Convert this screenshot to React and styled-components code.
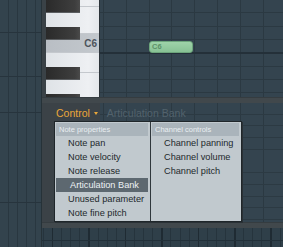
import React from "react";
import styled, { createGlobalStyle } from "styled-components";

const GlobalStyle = createGlobalStyle`
  html, body {
    margin: 0;
    padding: 0;
    background: #33434e;
    overflow: hidden;
  }
  body {
    font-family: "Liberation Sans", Arial, sans-serif;
  }
`;

const Page = styled.div`
  display: grid;
  grid-template-columns: 42px 1fr;
  width: 283px;
  height: 247px;
  overflow: hidden;
`;

const SideStrip = styled.div`
  background-color: #33434d;
  background-image:
    linear-gradient(to bottom, transparent 32px, #27343d 32px, #27343d 33px, transparent 33px, transparent 76px, #27343d 76px, #27343d 77px, transparent 77px, transparent 112px, #27343d 112px, #27343d 113px, transparent 113px, transparent 202px, #27343d 202px, #27343d 203px, transparent 203px),
    repeating-linear-gradient(to right, transparent 0, transparent 8px, #293740 8px, #293740 9px);
  border-right: 1px solid #263238;
`;

const Main = styled.div`
  display: flex;
  flex-direction: column;
  min-width: 0;
`;

const TopRow = styled.div`
  display: flex;
  height: 97px;
`;

const Gutter = styled.div`
  width: 4px;
  background: #3a4247;
`;

const Keyboard = styled.div`
  position: relative;
  display: flex;
  flex-direction: column;
  width: 53px;
  border-right: 1px solid #2b3339;
  overflow: hidden;
`;

const WhiteKey = styled.div`
  display: flex;
  align-items: center;
  justify-content: flex-end;
  height: ${(p) => p.h}px;
  flex-shrink: 0;
  box-sizing: border-box;
  padding: 1px 2px 0 0;
  border-bottom: 1px solid #c4c8cd;
  background: ${(p) =>
    p.active
      ? "linear-gradient(to right, #b9bec4, #c3c8cd)"
      : "linear-gradient(to right, #dfe3e7, #eef0f3 80%, #e4e7ea)"};
  color: #4d545c;
  font-size: 10px;
  font-weight: bold;
`;

const BlackKey = styled.div`
  position: absolute;
  left: 0;
  top: ${(p) => p.top}px;
  width: 34px;
  height: 13px;
  background: linear-gradient(to right, #2a2a2a, #3e3e3e 85%, #4a4a4a);
  border-bottom: 1px solid #5a5d60;
  box-sizing: border-box;
`;

const NoteGrid = styled.div`
  position: relative;
  flex: 1;
  background-color: #34444f;
  background-image:
    linear-gradient(to bottom, transparent 52px, #243039 52px, #243039 53.5px, transparent 53.5px),
    repeating-linear-gradient(to bottom, transparent 0, transparent 12.33px, #2b3942 12.33px, #2b3942 13.33px),
    repeating-linear-gradient(to right, transparent 0, transparent 3px, #2b3942 3px, #2b3942 4px, transparent 4px, transparent 22.8px);
`;

const Note = styled.div`
  position: absolute;
  left: ${(p) => p.x}px;
  top: ${(p) => p.y}px;
  width: ${(p) => p.w}px;
  height: 12px;
  box-sizing: border-box;
  border: 1px solid #6da57c;
  border-radius: 3px;
  background: linear-gradient(to bottom, #9ed3a9, #88c295);
  color: #5d9168;
  font-size: 7.5px;
  font-weight: bold;
  line-height: 10px;
  padding-left: 2px;
`;

const Band = styled.div`
  height: ${(p) => p.h}px;
  flex-shrink: 0;
  background: #41484c;
  border-top: 1px solid #353c40;
  box-sizing: border-box;
`;

const MidRow = styled.div`
  position: relative;
  display: grid;
  grid-template-columns: 58px 1fr;
  grid-template-rows: 18px 1fr;
  height: 119px;
`;

const Panel = styled.div`
  grid-row: 1 / 3;
  grid-column: 1;
  background: #3b4247;
`;

const EventGrid = styled.div`
  grid-row: 1 / 3;
  grid-column: 2;
  background-color: #34444f;
  background-image:
    repeating-linear-gradient(to bottom, transparent 0, transparent 10.7px, #2c3a43 10.7px, #2c3a43 11.7px),
    repeating-linear-gradient(to right, transparent 0, transparent 3px, #2b3942 3px, #2b3942 4px, transparent 4px, transparent 22.8px);
`;

const ControlBar = styled.div`
  grid-row: 1;
  grid-column: 1 / 3;
  z-index: 1;
  display: flex;
  align-items: center;
  padding: 1px 0 0 14px;
  font-size: 10.5px;
  white-space: nowrap;
`;

const ControlLabel = styled.span`
  color: #eaa73a;
`;

const Caret = styled.span`
  display: inline-block;
  margin: 1px 0 0 4px;
  border-left: 2.5px solid transparent;
  border-right: 2.5px solid transparent;
  border-top: 3px solid #eaa73a;
`;

const Current = styled.span`
  margin-left: 9px;
  color: #52626c;
`;

const Menu = styled.div`
  position: absolute;
  left: 12px;
  top: 18px;
  z-index: 2;
  display: grid;
  grid-template-columns: 96px 1fr;
  width: 188px;
  height: 101px;
  box-sizing: border-box;
  border: 1px solid #1f262a;
  background: #c1c9ce;
  box-shadow: 1px 1px 0 #2a3136;
`;

const MenuColumn = styled.div`
  display: flex;
  flex-direction: column;
  padding: 1px 2px 0 1px;
  border-right: ${(p) => (p.divided ? "1px solid #2f373c" : "none")};
`;

const MenuHeader = styled.div`
  height: 13px;
  padding-left: 3px;
  background: #aab4bb;
  color: #e9eef1;
  font-size: 7.5px;
  line-height: 13px;
  white-space: nowrap;
`;

const MenuItem = styled.div`
  height: 14px;
  padding-left: ${(p) => (p.active ? 14 : 12)}px;
  background: ${(p) => (p.active ? "#5d6870" : "transparent")};
  color: ${(p) => (p.active ? "#eef2f4" : "#22282c")};
  font-size: 9.2px;
  line-height: 14px;
  white-space: nowrap;
`;

const BottomGrid = styled.div`
  flex: 1;
  background-color: #2f3f49;
  background-image:
    linear-gradient(to bottom, transparent 12px, #223039 12px, #223039 13.5px, transparent 13.5px),
    repeating-linear-gradient(to right, transparent 0, transparent 10px, #1f2b33 10px, #1f2b33 11.5px, transparent 11.5px, transparent 36.4px),
    repeating-linear-gradient(to right, transparent 0, transparent 1px, #26343d 1px, #26343d 2px, transparent 2px, transparent 9.1px);
`;

const whiteKeys = [
  { h: 7 },
  { h: 27 },
  { h: 19, label: "C6", active: true },
  { h: 20 },
  { h: 27 },
];

const blackKeys = [0, 27, 67, 94];

const noteProps = [
  "Note pan",
  "Note velocity",
  "Note release",
  "Articulation Bank",
  "Unused parameter",
  "Note fine pitch",
];

const channelProps = ["Channel panning", "Channel volume", "Channel pitch"];

export default function App() {
  return (
    <>
      <GlobalStyle />
      <Page>
        <SideStrip />
        <Main>
          <TopRow>
            <Gutter />
            <Keyboard>
              {whiteKeys.map((k, i) => (
                <WhiteKey key={i} h={k.h} active={k.active}>
                  {k.label}
                </WhiteKey>
              ))}
              {blackKeys.map((top) => (
                <BlackKey key={top} top={top} />
              ))}
            </Keyboard>
            <NoteGrid>
              <Note x={49} y={41} w={44}>C6</Note>
            </NoteGrid>
          </TopRow>
          <Band h={6} />
          <MidRow>
            <Panel />
            <EventGrid />
            <ControlBar>
              <ControlLabel>Control</ControlLabel>
              <Caret />
              <Current>Articulation Bank</Current>
            </ControlBar>
            <Menu>
              <MenuColumn divided>
                <MenuHeader>Note properties</MenuHeader>
                {noteProps.map((n) => (
                  <MenuItem key={n} active={n === "Articulation Bank"}>
                    {n}
                  </MenuItem>
                ))}
              </MenuColumn>
              <MenuColumn>
                <MenuHeader>Channel controls</MenuHeader>
                {channelProps.map((n) => (
                  <MenuItem key={n}>{n}</MenuItem>
                ))}
              </MenuColumn>
            </Menu>
          </MidRow>
          <Band h={6} />
          <BottomGrid />
        </Main>
      </Page>
    </>
  );
}
